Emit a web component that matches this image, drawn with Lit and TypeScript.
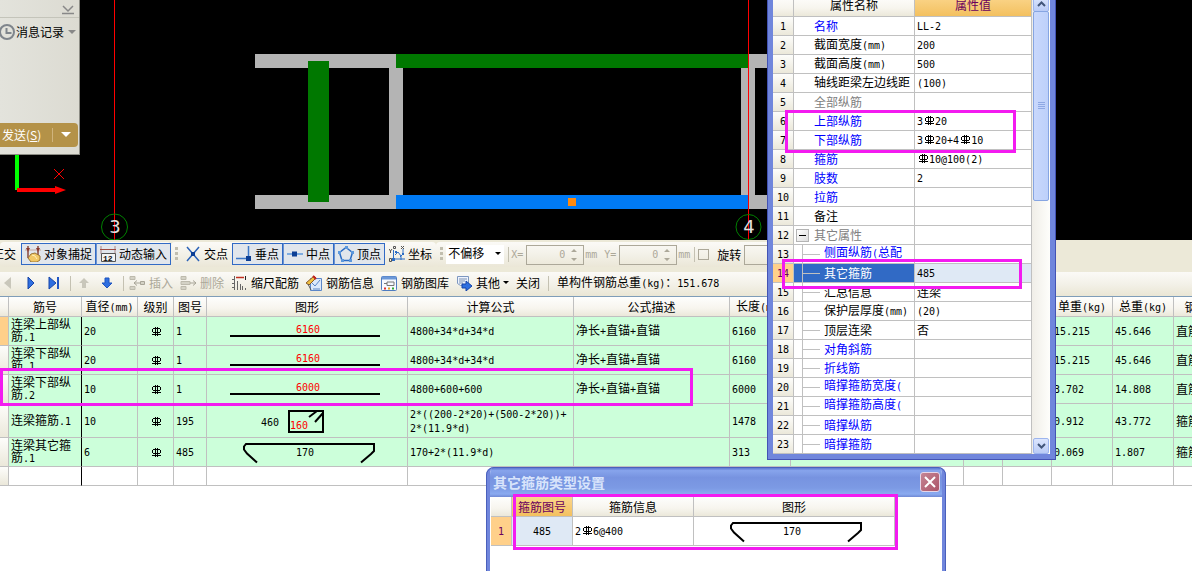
import { LitElement, html, svg, css, nothing, TemplateResult } from "lit";
import { customElement } from "lit/decorators.js";
import { classMap } from "lit/directives/class-map.js";

const textStyles = css`
  * { box-sizing: border-box; }
  .m { font-family: "DejaVu Sans Mono", monospace; font-size: 10px; }
  .bar { display: inline-block; vertical-align: -1px; width: 12px; height: 11px; }
  button, input, select { font: inherit; color: inherit; margin: 0; padding: 0; border: 0; background: none; }
  table { border-collapse: separate; border-spacing: 0; table-layout: fixed; }
  th { font-weight: normal; text-align: center; background: linear-gradient(#fefefd, #f7f5ee 60%, #ebe8da); white-space: nowrap; }
  th, td { border-right: 1px solid #c0c0c0; border-bottom: 1px solid #c0c0c0; padding: 0 2px; overflow: hidden; }
  .frame { position: absolute; border: 3px solid #f31bf0; pointer-events: none; }
`;

/* HRB400 bar grade sign */
const barSign = html`<svg class="bar" viewBox="0 0 12 11" fill="none" stroke="currentColor">
  <path d="M5.5 1v9M7.5 1v9M2 8.5h9M4.500 2.500h5l1 1v2l-1 1h-6l-1-1v-2l1-1z" shape-rendering="crispEdges"/></svg>`;

/* Latin runs take the half-width face, the ф mark becomes the bar sign */
function mix(s: string): unknown[] {
  return (s.match(/ф|\n|[\x20-\x7e]+|[^\x20-\x7eф\n]+/g) ?? []).map((p) =>
    p === "ф" ? barSign : /^[\x20-\x7e]+$/.test(p) ? html`<span class="m">${p}</span>` : p);
}

const straight = (n: string) => html`<svg class="shape" width="200" height="28" viewBox="0 0 200 28">
  <path d="M23 19h150" stroke="#000" stroke-width="2"/>
  <text x="101" y="16" fill="#f00" text-anchor="middle">${n}</text></svg>`;
const stirrup = html`<svg class="shape" width="200" height="33" viewBox="0 0 200 33">
  <text x="54" y="22">460</text>
  <path d="M82 7h34v21h-34zM102 13l8-6M108 18l8-9" fill="none" stroke="#000" stroke-width="2"/>
  <text x="83" y="25" fill="#f00">160</text></svg>`;
const tie = html`<svg class="shape" width="200" height="28" viewBox="0 0 200 28">
  <path d="M50 24.500l-10-9l-3-4v-3l2-2.500h128v7l-3 3l-10 8.500" fill="none" stroke="#000" stroke-width="2"/>
  <text x="98" y="18" text-anchor="middle">170</text></svg>`;

const icon = (body: TemplateResult) => html`<svg class="ic" width="16" height="16" viewBox="0 0 16 16" fill="none">${body}</svg>`;

const icons = {
  snap: icon(svg`<path d="M3 0v12M13 0v9" stroke="#8a4a3c" stroke-width="1.500"/><path d="M0 4h16" stroke="#c8a8a0"/><path d="M1 2l2 4l2-4M11 2l2 4l2-4" fill="#8a3a30"/><path d="M6 8l4-1l5 3v4l-3 2h-6l-3-4z" fill="#f2c866" stroke="#9a7434"/><path d="M7 9l3 1l2 3" stroke="#fff0b8"/>`),
  dyn: icon(svg`<path d="M1 0v8M15 0v8" stroke="#a88"/><path d="M0 3.500h16" stroke="#a04a40"/><path d="M1.500 7.500h14v8h-14z" fill="#f4f4f4" stroke="#555"/><text x="3" y="15" font-size="8" font-weight="bold" font-family="Liberation Mono" fill="#111">12</text>`),
  cross: icon(svg`<path d="M2 1l12 14M14 1l-12 14" stroke="#2b62b8" stroke-width="1.500"/><path d="M6 6h4v4h-4z" fill="#0c3f95"/>`),
  perp: icon(svg`<path d="M0 12.500h15M12.500 0v12" stroke="#3c78c8" stroke-width="1.500"/><path d="M10 10h5v5h-5z" fill="#0c3f95"/>`),
  mid: icon(svg`<path d="M0 8h16" stroke="#5c98dc" stroke-width="1.500"/><path d="M5 5.500h5v5h-5z" fill="#0c3f95"/>`),
  vertex: icon(svg`<path d="M8 1.500l6.500 5l-2.500 8h-8l-2.500-8z" stroke="#2b6cc4" stroke-width="1.500"/><path d="M7 0h3v3h-3zM0 5h3v3h-3zM13 5h3v3h-3zM3 13h3v3h-3zM11 13h3v3h-3z" fill="#5c98dc"/>`),
  coord: icon(svg`<path d="M4.500 4v9h12M6 9l3-3l3 4v4M14 3v5l-3 3" stroke="#2b6cc4"/><path d="M6 5h2v2h-2zM3 12h3v3h-3zM13 7h2v2h-2z" fill="#2b6cc4"/><path d="M0 3l1.500 2l1.500-2M1.500 5v2M.5 12.500h2v3h-2zM4.500 .5h2v2h-2zM12 0l3 3M15 0l-3 3" stroke="#555"/>`),
  prev: icon(svg`<path d="M11 2v12l-7-6z" fill="#c9c7bb"/>`),
  next: icon(svg`<path d="M5 2l6 6l-6 6z" fill="#2f6fe0" stroke="#1745a8"/>`),
  last: icon(svg`<path d="M3 2l7 6l-7 6z" fill="#2f6fe0" stroke="#1745a8"/><path d="M12 2v12" stroke="#2257c4" stroke-width="2"/>`),
  up: icon(svg`<path d="M8 3l5 5h-3v5h-4v-5h-3z" fill="#c9c7bb"/>`),
  down: icon(svg`<path d="M8 13l5-5h-3v-5h-4v5h-3z" fill="#2f6fe0" stroke="#1f55c0"/>`),
  insert: icon(svg`<path d="M1 1.500h5v3h-5zM1 11.500h5v3h-5z" fill="#d4d2c6" stroke="#bdbaad"/><path d="M11.500 6.500h4v3h-4z" fill="#d4d2c6" stroke="#a8a598"/><path d="M5 8h6M8 5.500l-3 2.500l3 2.500" stroke="#a8a598"/>`),
  remove: icon(svg`<path d="M1 1.500h5v3h-5zM1 11.500h5v3h-5zM1 6.500h9v3h-9z" fill="#d4d2c6" stroke="#bdbaad"/><path d="M10 8h6M13 5.500l3 2.500l-3 2.500" stroke="#a8a598"/>`),
  scale: icon(svg`<path d="M3.500 1v14M6.500 6v9M9.500 9v6M11.500 11v4M14.500 13v2" stroke="#666"/><path d="M1 4.500h2M1 8.500h2M1 12.500h2" stroke="#666"/><path d="M5 2.500h8" stroke="#c03020" stroke-width="1.500"/><path d="M14.500 1v4" stroke="#222"/>`),
  info: icon(svg`<path d="M4.500 3.500h11v12h-11z" fill="#dce8fa" stroke="#5b86c8"/><path d="M6 8l3 3l5-6M7 14h7" stroke="#5b86c8"/><path d="M0 8l8-7l2 2l-7 7z" fill="#f0c040" stroke="#8a5a28"/><path d="M7 1l3 3" stroke="#c02020" stroke-width="2"/><path d="M2 9l3 6" stroke="#555"/>`),
  lib: icon(svg`<rect x="0.500" y="1.500" width="15" height="14" rx="1" fill="#f6f9ff" stroke="#4f7cc0"/><path d="M1 3h14" stroke="#6c98d8" stroke-width="3"/><path d="M3 8.500h3M6 7v3.500h7v-3.500z" stroke="#777"/><path d="M3 13.500h2" stroke="#d33" stroke-width="2"/><path d="M7 13.500h2" stroke="#e8a020" stroke-width="2"/><path d="M11 13.500h2" stroke="#3a3" stroke-width="2"/>`),
  other: icon(svg`<path d="M1.500 1.500h11v9h-8l-3-2z" fill="#eef4ff" stroke="#7d97c0"/><path d="M3 4h8M3 6h6M3 8h4" stroke="#7a8fb0"/><path d="M6 9h4v-3l6 5l-6 5v-3h-4z" fill="#2f6fe0" stroke="#1745a8"/>`),
};

@customElement("cad-canvas")
class CadCanvas extends LitElement {
  static styles = css`
    :host { display: block; height: 240px; background: #000; overflow: hidden; }
    svg { display: block; }
    text { font: 18px "DejaVu Sans", sans-serif; fill: #e0e0e0; text-anchor: middle; }
  `;
  render() {
    return html`<svg width="1192" height="240" viewBox="0 0 1192 240">
      <g fill="#b4b4b4">
        <rect x="255" y="54" width="550" height="14"/><rect x="255" y="195" width="550" height="14"/>
        <rect x="389" y="54" width="14" height="155"/><rect x="741" y="54" width="14" height="155"/>
      </g>
      <rect x="308" y="61" width="21" height="141" fill="#007800"/>
      <rect x="396" y="54" width="352" height="14" fill="#007800"/>
      <rect x="396" y="195" width="352" height="14" fill="#007af4"/>
      <rect x="568" y="198" width="8" height="8" fill="#ff8a10"/>
      <path d="M114.500 0v240M748.500 0v240" stroke="#f00"/>
      <g fill="none" stroke="#008000"><circle cx="114.500" cy="227" r="13"/><circle cx="748.500" cy="227" r="12.500"/></g>
      <text x="115" y="233">3</text><text x="749" y="233">4</text>
      <path d="M17 150v40" stroke="#0f0" stroke-width="4"/>
      <path d="M17 190h40" stroke="#f00" stroke-width="4"/><path d="M55 186l11 4l-11 4z" fill="#f00"/>
      <path d="M54 169l10 10M54 179l10-10" stroke="#f00"/>
    </svg>`;
  }
}

@customElement("chat-panel")
class ChatPanel extends LitElement {
  static styles = [textStyles, css`
    :host { display: flex; flex-direction: column; width: 80px; height: 155px; background: linear-gradient(90deg, #e3e3dc, #dcdbd2); border-right: 1px solid #8c8c84; border-bottom: 1px solid #8c8c84; overflow: hidden; }
    .fold { height: 18px; border-bottom: 1px solid #c4c4ba; text-align: right; padding: 2px 4px 0; }
    .log { display: flex; align-items: center; height: 28px; gap: 1px; }
    .log svg { flex: none; }
    .grow { flex: 1; }
    .send { display: flex; height: 24px; margin: 0 1px 7px 0; background: #b49248; color: #fff; border-radius: 0 4px 4px 0; }
    .go { flex: 1; text-align: left; padding-left: 2px; white-space: nowrap; }
    .more { width: 26px; border-left: 1px solid #d0b47c; margin: 5px 0; }
    .send svg { display: block; margin: auto; }
  `];
  render() {
    return html`
      <button class="fold" aria-label="fold"><svg width="14" height="12" fill="none" stroke="#888"><path d="M1 10.500h12M2 3l5 5l5-5" stroke-width="1.500"/></svg></button>
      <button class="log">
        <svg width="15" height="16" fill="none" stroke="#7f858c"><circle cx="7" cy="8" r="7" stroke-width="2"/><path d="M6.500 4v5h5" stroke-width="2"/></svg>
        <span>消息记录</span>
        <svg width="12" height="6"><path d="M3 1h8l-4 4z" fill="#888"/></svg>
      </button>
      <div class="grow"></div>
      <div class="send">
        <button class="go">发送(<u>S</u>)</button>
        <button class="more" aria-label="send options"><svg width="12" height="6"><path d="M1 0h10l-5 5z" fill="#fff"/></svg></button>
      </div>`;
  }
}

@customElement("snap-bar")
class SnapBar extends LitElement {
  static styles = [textStyles, css`
    :host { display: flex; height: 32px; padding: 2px 0 5px; background: #ece9d8; overflow: hidden; white-space: nowrap; }
    .strip { flex: none; display: flex; align-items: center; background: linear-gradient(#fbfaf7, #f3f1e8 50%, #ebe7d7); border-radius: 4px; }
    .tb { display: flex; align-items: center; gap: 3px; height: 22px; padding: 0 3px; border: 1px solid transparent; margin-bottom: 2px; }
    .on { background: #e1e6ec; border-color: #316ac5; }
    .on + .on { border-left-color: #6c93cf; }
    .cut { margin: 0 5px 2px -8px; }
    .grip { width: 3px; height: 15px; margin: 0 3px 0 4px; background: repeating-linear-gradient(#c1beaf 0 3px, transparent 3px 5px); }
    .pick { position: relative; width: 58px; height: 19px; background: #fff; }
    .pick select { appearance: none; width: 100%; height: 15px; padding-left: 2px; display: block; line-height: 15px; }
    .pick svg { position: absolute; right: 3px; top: 7px; pointer-events: none; }
    .sep { width: 1px; height: 15px; background: #c4c1b2; margin: 0 2px 0 4px; }
    .dim { color: #aca899; }
    .num { display: flex; width: 58px; height: 20px; border: 1px solid #aca899; margin: 0 1px 0 3px; }
    .num input { flex: 1; min-width: 0; text-align: right; color: #aca899; }
    .num svg { margin: 2px 4px 0 6px; flex: none; }
    .y { margin-left: 7px; }
    .tick { appearance: none; width: 11px; height: 11px; border: 1px solid #aca899; margin: 0 8px 0 1px; }
  `];
  private num(id: string) {
    return html`<span class="num"><input id=${id} class="m" value="0" disabled aria-label=${id}>
      <svg width="8" height="14"><path d="M0 4l3-3l3 3zM0 10h6l-3 3z" fill="#aca899"/></svg></span>`;
  }
  render() {
    const tb = (i: TemplateResult, t: string, on: boolean) => html`<button class=${classMap({ tb: true, on })}>${i}${t}</button>`;
    return html`
      <div class="strip">
        <button class="cut">正交</button>
        ${tb(icons.snap, "对象捕捉", true)}${tb(icons.dyn, "动态输入", true)}
      </div>
      <div class="strip">
        <i class="grip"></i>
        ${tb(icons.cross, "交点", false)}${tb(icons.perp, "垂点", true)}${tb(icons.mid, "中点", true)}${tb(icons.vertex, "顶点", true)}${tb(icons.coord, "坐标", false)}
      </div>
      <div class="strip">
        <i class="grip"></i>
        <span class="pick"><select aria-label="偏移"><option>不偏移</option></select><svg width="6" height="4"><path d="M0 0h6l-3 3z"/></svg></span>
        <i class="sep"></i>
        <label class="m dim" for="x">X=</label>${this.num("x")}<span class="m dim">mm</span>
        <label class="m dim y" for="y">Y=</label>${this.num("y")}<span class="m dim">mm</span>
        <i class="sep"></i>
        <input class="tick" type="checkbox" id="rot"><label for="rot">旋转</label>
        ${this.num("angle")}
      </div>`;
  }
}

@customElement("edit-bar")
class EditBar extends LitElement {
  static styles = [textStyles, css`
    :host { display: flex; align-items: center; gap: 7px; height: 25px; padding: 0 0 2px; background: linear-gradient(#fbfaf7, #f3f1e8 50%, #eae6d5); border-bottom: 1px solid #7f9db9; overflow: hidden; white-space: nowrap; }
    button { display: flex; align-items: center; gap: 4px; flex: none; }
    .off { color: #aca899; }
    .sep { flex: none; width: 1px; height: 15px; background: #c4c1b2; margin: 0 -2px 0 1px; }
    .drop { margin-left: -1px; }
    .sum { margin-left: 3px; }
  `];
  render() {
    return html`
      <button aria-label="prev">${icons.prev}</button><button aria-label="next">${icons.next}</button><button aria-label="last">${icons.last}</button>
      <i class="sep"></i>
      <button aria-label="up">${icons.up}</button><button aria-label="down">${icons.down}</button>
      <i class="sep"></i>
      <button class="off">${icons.insert}插入</button><button class="off">${icons.remove}删除</button>
      <button>${icons.scale}缩尺配筋</button><button>${icons.info}钢筋信息</button><button>${icons.lib}钢筋图库</button>
      <button>${icons.other}其他<svg class="drop" width="6" height="4"><path d="M0 0h6l-3 3z"/></svg></button>
      <button>关闭</button>
      <i class="sep"></i>
      <span class="sum">${mix("单构件钢筋总重(kg)：151.678")}</span>`;
  }
}

interface Bar { name: string; dia: string; no: string; shape: unknown; calc: string; note: string; len: string; unit: string; total: string; kind: string; tall?: boolean; }

const bars: Bar[] = [
  { name: "连梁上部纵筋.1", dia: "20", no: "1", shape: straight("6160"), calc: "4800+34*d+34*d", note: "净长+直锚+直锚", len: "6160", unit: "15.215", total: "45.646", kind: "直筋" },
  { name: "连梁下部纵筋.1", dia: "20", no: "1", shape: straight("6160"), calc: "4800+34*d+34*d", note: "净长+直锚+直锚", len: "6160", unit: "15.215", total: "45.646", kind: "直筋" },
  { name: "连梁下部纵筋.2", dia: "10", no: "1", shape: straight("6000"), calc: "4800+600+600", note: "净长+直锚+直锚", len: "6000", unit: "3.702", total: "14.808", kind: "直筋" },
  { name: "连梁箍筋.1", dia: "10", no: "195", shape: stirrup, calc: "2*((200-2*20)+(500-2*20))+\n2*(11.9*d)", note: "", len: "1478", unit: "0.912", total: "43.772", kind: "箍筋", tall: true },
  { name: "连梁其它箍筋.1", dia: "6", no: "485", shape: tie, calc: "170+2*(11.9*d)", note: "", len: "313", unit: "0.069", total: "1.807", kind: "箍筋" },
];

@customElement("bar-table")
class BarTable extends LitElement {
  static styles = [textStyles, css`
    :host { display: block; overflow: hidden; background: #fff; }
    table { width: 1244px; line-height: 12px; }
    th { height: 20px; }
    td { height: 29px; background: #ccffda; white-space: pre-line; }
    .tall td { height: 34px; }
    .blank td { height: 19px; background: #fff; }
    td.g, .blank td.g { background: linear-gradient(#fdfdfb, #ebe8da); }
    tr:first-child td.g { background: #ffd08a; }
    td.n { border-right-color: #000; }
    .c { text-align: center; }
    td.s { padding: 0; }
    .shape { display: block; font: 10px "DejaVu Sans Mono", monospace; }
    .c0 { width: 9px; } .c1 { width: 73px; } .c2 { width: 56px; } .c3 { width: 36px; } .c4 { width: 33px; }
    .c5 { width: 201px; } .c6 { width: 166px; } .c7 { width: 156px; } .c8 { width: 61px; } .c9 { width: 173px; }
    .c10 { width: 39px; } .c11 { width: 49px; } .c12 { width: 61px; } .c13 { width: 61px; } .c14 { width: 70px; }
  `];
  render() {
    const heads = ["", "筋号", "直径(mm)", "级别", "图号", "图形", "计算公式", "公式描述", "长度(mm)", "", "", "", "单重(kg)", "总重(kg)", "钢筋归类"];
    return html`<table>
      <colgroup>${heads.map((_, i) => html`<col class="c${i}">`)}</colgroup>
      <thead><tr>${heads.map((h) => html`<th>${mix(h)}</th>`)}</tr></thead>
      <tbody>
        ${bars.map((b) => html`<tr class=${b.tall ? "tall" : ""}><td class="g"></td><td class="n">${mix(b.name)}</td><td>${mix(b.dia)}</td><td class="c">${barSign}</td><td>${mix(b.no)}</td><td class="s">${b.shape}</td><td>${mix(b.calc)}</td><td>${mix(b.note)}</td><td>${mix(b.len)}</td><td></td><td></td><td></td><td>${mix(b.unit)}</td><td>${mix(b.total)}</td><td>${b.kind}</td></tr>`)}
        <tr class="blank">${heads.map((_, i) => html`<td class=${i === 0 ? "g" : i === 1 ? "n" : ""}></td>`)}</tr>
      </tbody></table>`;
  }
}

/* name, value, colour class, kind: "" top level, "box" group head, "sub" child */
const props: [string, string, string, string][] = [
  ["名称", "LL-2", "blue", ""], ["截面宽度(mm)", "200", "", ""], ["截面高度(mm)", "500", "", ""],
  ["轴线距梁左边线距", "(100)", "", "high"], ["全部纵筋", "", "gray", ""], ["上部纵筋", "3ф20", "blue", ""],
  ["下部纵筋", "3ф20+4ф10", "blue", ""], ["箍筋", "ф10@100(2)", "blue", ""], ["肢数", "2", "blue", ""],
  ["拉筋", "", "blue", ""], ["备注", "", "", ""], ["其它属性", "", "gray", "box"],
  ["侧面纵筋(总配", "", "blue", "sub high"], ["其它箍筋", "485", "white", "sub sel"], ["汇总信息", "连梁", "", "sub"],
  ["保护层厚度(mm)", "(20)", "", "sub"], ["顶层连梁", "否", "", "sub"], ["对角斜筋", "", "blue", "sub"],
  ["折线筋", "", "blue", "sub"], ["暗撑箍筋宽度(", "", "blue", "sub high"], ["暗撑箍筋高度(", "", "blue", "sub high"],
  ["暗撑纵筋", "", "blue", "sub"], ["暗撑箍筋", "", "blue", "sub"],
];

@customElement("property-window")
class PropertyWindow extends LitElement {
  static styles = [textStyles, css`
    :host { display: flex; align-items: stretch; width: 289px; background: #fff; border: 6px solid #7086dc; border-top: 0; outline: 1px solid #4353b4; outline-offset: -1px; line-height: 14px; }
    table { flex: 1; width: 259px; }
    th { height: 21px; padding-bottom: 3px; }
    th.val { background: linear-gradient(#fbd68c, #f3c05f); color: #6a005e; }
    td { height: 19px; white-space: nowrap; }
    td.no { background: linear-gradient(#fdfdfb, #ebe8da); text-align: center; padding: 0; }
    td.name { padding: 0; }
    .row { display: flex; align-items: center; height: 18px; padding-left: 20px; }
    .high .row { padding-bottom: 3px; }
    .sub .row { padding-left: 0; }
    .sub .row::before { content: ""; width: 17px; height: 18px; margin: 0 4px 0 8px; border-left: 1px solid #c0c0c0; background: linear-gradient(#c0c0c0, #c0c0c0) 0 9px / 17px 1px no-repeat; flex: none; }
    .sub.high .row::before { margin-top: 3px; }
    .box .row { padding-left: 2px; gap: 5px; }
    .fold { width: 13px; height: 13px; border: 1px solid #b4b4b4; background: linear-gradient(135deg, #fff, #ddd); display: grid; place-items: center; }
    .blue .row { color: #00f; } .gray .row { color: #808080; } .white .row { color: #fff; }
    .sel .no { background: #ffd08a; color: #6a005e; }
    .sel .name { background: #316ac5; }
    .sel .v { background: #dfe9f5; }
    .w0 { width: 21px; } .w1 { width: 121px; } .w2 { width: 117px; }
    .scroll { width: 18px; display: flex; flex-direction: column; background: linear-gradient(90deg, #f0eee8, #fefefb); padding: 0 1px; flex: none; }
    .scroll button { display: grid; place-items: center; height: 16px; background: linear-gradient(#dce6fe, #b9cbf6); border: 1px solid #9db5ee; border-radius: 2px; }
    .thumb { height: 190px; margin-top: -1px; background: linear-gradient(90deg, #c9d8fc, #bdd0fa); border: 1px solid #86a5e2; border-radius: 2px; display: grid; place-items: center; }
    .grow { flex: 1; }
  `];
  render() {
    return html`
      <table>
        <colgroup><col class="w0"><col class="w1"><col class="w2"></colgroup>
        <thead><tr><th></th><th>属性名称</th><th class="val">属性值</th></tr></thead>
        <tbody>${props.map(([n, v, c, k], i) => html`<tr class="${c} ${k}"><td class="no">${mix(String(i + 1))}</td>
          <td class="name"><div class="row">${k === "box" ? html`<button class="fold" aria-label="fold"><svg width="7" height="1"><rect width="7" height="1"/></svg></button>` : nothing}<span>${mix(n)}</span></div></td>
          <td class="v">${mix(v)}</td></tr>`)}</tbody>
      </table>
      <div class="scroll">
        <button aria-label="scroll up"><svg width="9" height="6" fill="none" stroke="#42567a" stroke-width="2"><path d="M1 5l3.500-3.500l3.500 3.500"/></svg></button>
        <div class="thumb"><svg width="7" height="8" stroke="#8ea8e4"><path d="M0 .5h7M0 2.500h7M0 4.500h7M0 6.500h7"/></svg></div>
        <div class="grow"></div>
        <button aria-label="scroll down"><svg width="9" height="6" fill="none" stroke="#42567a" stroke-width="2"><path d="M1 1l3.500 3.500l3.500-3.500"/></svg></button>
      </div>`;
  }
}

@customElement("stirrup-dialog")
class StirrupDialog extends LitElement {
  static styles = [textStyles, css`
    :host { display: flex; flex-direction: column; width: 460px; background: #fff; border: 4px solid #7086dc; border-width: 0 4px; border-radius: 8px 8px 0 0; outline: 1px solid #4a60bc; outline-offset: -1px; overflow: hidden; }
    header { display: flex; align-items: center; justify-content: space-between; height: 30px; margin: 0 -4px; padding: 0 6px 0 7px; background: linear-gradient(#4f68c8, #87a4ec 12%, #7793e0 35%, #7c9ae4 70%, #8aaaf0 90%, #6f88d4); color: #d8e4fb; font-size: 14px; font-weight: bold; flex: none; }
    .close { width: 20px; height: 20px; border: 1px solid #e6d6e8; border-radius: 3px; background: linear-gradient(135deg, #c58594, #ac5468); display: grid; place-items: center; }
    table { width: 404px; margin-left: 1px; }
    th { height: 20px; }
    td { height: 28px; }
    .pickh { background: linear-gradient(#fbd68c, #f3c05f); color: #6a005e; }
    .no { background: #ffd08a; color: #6a005e; text-align: center; }
    .pick { background: #dfe9f5; text-align: center; }
    .s { padding: 0; }
    .shape { display: block; font: 10px "DejaVu Sans Mono", monospace; }
    .w0 { width: 21px; } .w1 { width: 61px; } .w2 { width: 121px; } .w3 { width: 201px; }
  `];
  render() {
    return html`
      <header><span>其它箍筋类型设置</span><button class="close" aria-label="close"><svg width="12" height="12" stroke="#fff" stroke-width="2"><path d="M1 1l10 10M11 1l-10 10"/></svg></button></header>
      <table>
        <colgroup><col class="w0"><col class="w1"><col class="w2"><col class="w3"></colgroup>
        <thead><tr><th></th><th class="pickh">箍筋图号</th><th>箍筋信息</th><th>图形</th></tr></thead>
        <tbody><tr><td class="no">${mix("1")}</td><td class="pick">${mix("485")}</td><td>${mix("2ф6@400")}</td><td class="s">${tie}</td></tr></tbody>
      </table>`;
  }
}

@customElement("app-root")
class AppRoot extends LitElement {
  static styles = [textStyles, css`
    :host { display: block; position: relative; height: 100vh; overflow: hidden; background: #fff; color: #000; font: 12px/14px "Noto Sans CJK SC", sans-serif; }
    chat-panel { position: absolute; left: 0; top: 0; }
    property-window { position: absolute; left: 767px; top: -4px; }
    stirrup-dialog { position: absolute; left: 486px; top: 467px; bottom: -4px; }
    .f1 { left: 785px; top: 110px; width: 231px; height: 43px; }
    .f2 { left: 782px; top: 259px; width: 240px; height: 30px; }
    .f3 { left: 0; top: 368px; width: 693px; height: 38px; }
    .f4 { left: 513px; top: 494px; width: 385px; height: 56px; }
  `];
  render() {
    return html`
      <cad-canvas></cad-canvas>
      <snap-bar></snap-bar>
      <edit-bar></edit-bar>
      <bar-table></bar-table>
      <chat-panel></chat-panel>
      <property-window></property-window>
      <stirrup-dialog></stirrup-dialog>
      <div class="frame f1"></div><div class="frame f2"></div><div class="frame f3"></div><div class="frame f4"></div>`;
  }
}
